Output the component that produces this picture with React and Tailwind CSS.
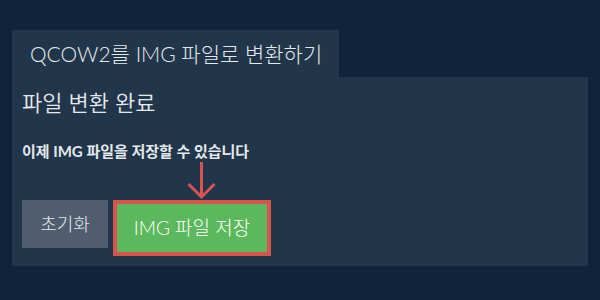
import React from "react";

export default function App() {
  const font = { fontFamily: 'Lato, "Noto Sans CJK KR", sans-serif' };
  return (
    <div className="w-[600px] h-[300px] bg-[#11233a] pt-[30px] px-[12px]" style={font}>
      <div className="w-[327px] h-[47px] bg-[#22364b] flex items-center pl-[18px] text-[21px] font-light text-[#e6e9ec] leading-none">
        QCOW2를 IMG 파일로 변환하기
      </div>
      <div className="h-[189px] bg-[#22364b] px-[10px] pt-[10px]">
        <div className="text-[22px] font-[350] leading-[32px] text-[#e6e9ec]">파일 변환 완료</div>
        <div className="mt-[22px] text-[15px] leading-[20px] font-bold text-[#e6e9ec]">
          이제 IMG 파일을 저장할 수 있습니다
        </div>
        <div className="flex pl-[165px] h-[39px]">
          <svg width="30" height="39" viewBox="0 0 30 39">
            <path d="M14.5 1 L14.5 36 M1.5 23 L14.5 36 L27.5 23" stroke="#d9534f" strokeWidth="3" fill="none" />
          </svg>
        </div>
        <div className="flex items-start gap-[5px]">
          <button className="w-[86px] h-[48px] bg-[#4f5d6f] text-[18px] font-light text-[#e6e9ec] flex items-center justify-center">
            초기화
          </button>
          <div className="border-[4px] border-[#d9534f]">
            <button className="w-[150px] h-[48px] bg-[#5cb85c] text-[19px] font-light text-white flex items-center justify-center">
              IMG 파일 저장
            </button>
          </div>
        </div>
      </div>
    </div>
  );
}
